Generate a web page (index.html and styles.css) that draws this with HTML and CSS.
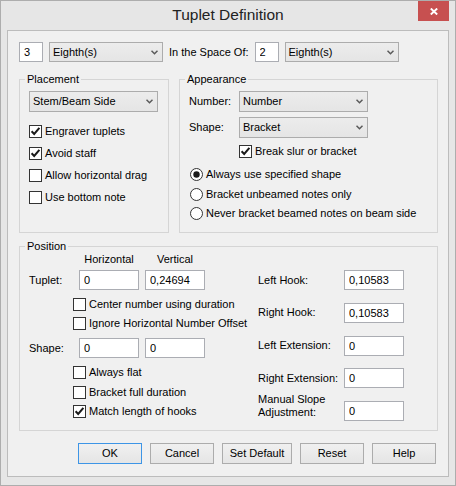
FILE: index.html
```html
<!DOCTYPE html>
<html>
<head>
<meta charset="utf-8">
<title>Tuplet Definition</title>
<link rel="stylesheet" href="styles.css">
</head>
<body>
<div class="window">
  <div class="titlebar">
    <div class="title">Tuplet Definition</div>
    <div class="close"><svg width="8" height="7" viewBox="0 0 8 7"><path d="M0.8 0.5 L7.2 6.5 M7.2 0.5 L0.8 6.5" stroke="#fff" stroke-width="1.9" fill="none"/></svg></div>
  </div>
  <div class="client">
    <div class="top-row">
      <input class="field num" value="3">
      <div class="combo w114"><span>Eighth(s)</span><svg class="chev" width="7" height="5" viewBox="0 0 7 5"><path d="M0.5 0.8 L3.5 3.8 L6.5 0.8" stroke="#5a5a5a" stroke-width="1.5" fill="none"/></svg></div>
      <span class="lbl">In the Space Of:</span>
      <input class="field num" value="2">
      <div class="combo w114"><span>Eighth(s)</span><svg class="chev" width="7" height="5" viewBox="0 0 7 5"><path d="M0.5 0.8 L3.5 3.8 L6.5 0.8" stroke="#5a5a5a" stroke-width="1.5" fill="none"/></svg></div>
    </div>

    <div class="groups">
      <fieldset class="group placement">
        <legend>Placement</legend>
        <div class="group-body">
          <div class="combo w129 tall"><span>Stem/Beam Side</span><svg class="chev" width="7" height="5" viewBox="0 0 7 5"><path d="M0.5 0.8 L3.5 3.8 L6.5 0.8" stroke="#5a5a5a" stroke-width="1.5" fill="none"/></svg></div>
          <div class="checks place-checks">
            <label class="check"><span class="box"><svg width="11" height="11" viewBox="0 0 11 11"><path d="M1.6 5.2 L4.2 8 L9.4 1.8" stroke="#1a1a1a" stroke-width="2" fill="none"/></svg></span>Engraver tuplets</label>
            <label class="check"><span class="box"><svg width="11" height="11" viewBox="0 0 11 11"><path d="M1.6 5.2 L4.2 8 L9.4 1.8" stroke="#1a1a1a" stroke-width="2" fill="none"/></svg></span>Avoid staff</label>
            <label class="check"><span class="box"></span>Allow horizontal drag</label>
            <label class="check"><span class="box"></span>Use bottom note</label>
          </div>
        </div>
      </fieldset>

      <fieldset class="group appearance">
        <legend>Appearance</legend>
        <div class="group-body">
          <div class="form-row">
            <span class="lbl w50">Number:</span>
            <div class="combo w129 tall"><span>Number</span><svg class="chev" width="7" height="5" viewBox="0 0 7 5"><path d="M0.5 0.8 L3.5 3.8 L6.5 0.8" stroke="#5a5a5a" stroke-width="1.5" fill="none"/></svg></div>
          </div>
          <div class="form-row second">
            <span class="lbl w50">Shape:</span>
            <div class="combo w129 tall"><span>Bracket</span><svg class="chev" width="7" height="5" viewBox="0 0 7 5"><path d="M0.5 0.8 L3.5 3.8 L6.5 0.8" stroke="#5a5a5a" stroke-width="1.5" fill="none"/></svg></div>
          </div>
          <label class="check break"><span class="box"><svg width="11" height="11" viewBox="0 0 11 11"><path d="M1.6 5.2 L4.2 8 L9.4 1.8" stroke="#1a1a1a" stroke-width="2" fill="none"/></svg></span>Break slur or bracket</label>
          <div class="radios">
            <label class="radio"><svg class="rdo" width="13" height="13" viewBox="0 0 13 13"><circle cx="6.5" cy="6.5" r="6" fill="#fff" stroke="#333"/><circle cx="6.5" cy="6.5" r="3.2" fill="#1a1a1a"/></svg>Always use specified shape</label>
            <label class="radio"><svg class="rdo" width="13" height="13" viewBox="0 0 13 13"><circle cx="6.5" cy="6.5" r="6" fill="#fff" stroke="#333"/></svg>Bracket unbeamed notes only</label>
            <label class="radio"><svg class="rdo" width="13" height="13" viewBox="0 0 13 13"><circle cx="6.5" cy="6.5" r="6" fill="#fff" stroke="#333"/></svg>Never bracket beamed notes on beam side</label>
          </div>
        </div>
      </fieldset>
    </div>

    <fieldset class="group position">
      <legend>Position</legend>
      <div class="pos-body">
        <div class="pos-left">
          <div class="pos-grid pos-head"><span class="col-h">Horizontal</span><span class="col-v">Vertical</span></div>
          <div class="pos-grid pos-row">
            <span class="lbl">Tuplet:</span>
            <input class="field w60" value="0">
            <input class="field w60" value="0,24694">
          </div>
          <div class="pos-checks first">
            <label class="check"><span class="box"></span>Center number using duration</label>
            <label class="check"><span class="box"></span>Ignore Horizontal Number Offset</label>
          </div>
          <div class="pos-grid pos-row shape-row">
            <span class="lbl">Shape:</span>
            <input class="field w60" value="0">
            <input class="field w60" value="0">
          </div>
          <div class="pos-checks second">
            <label class="check"><span class="box"></span>Always flat</label>
            <label class="check"><span class="box"></span>Bracket full duration</label>
            <label class="check"><span class="box"><svg width="11" height="11" viewBox="0 0 11 11"><path d="M1.6 5.2 L4.2 8 L9.4 1.8" stroke="#1a1a1a" stroke-width="2" fill="none"/></svg></span>Match length of hooks</label>
          </div>
        </div>
        <div class="pos-right">
          <div class="r-row"><span class="lbl w86">Left Hook:</span><input class="field w60" value="0,10583"></div>
          <div class="r-row"><span class="lbl w86">Right Hook:</span><input class="field w60" value="0,10583"></div>
          <div class="r-row"><span class="lbl w86">Left Extension:</span><input class="field w60" value="0"></div>
          <div class="r-row"><span class="lbl w86">Right Extension:</span><input class="field w60" value="0"></div>
          <div class="r-row two"><span class="lbl w86 two-line">Manual Slope<br>Adjustment:</span><input class="field w60" value="0"></div>
        </div>
      </div>
    </fieldset>

    <div class="buttons">
      <button class="btn ok">OK</button>
      <button class="btn">Cancel</button>
      <button class="btn wide">Set Default</button>
      <button class="btn">Reset</button>
      <button class="btn">Help</button>
    </div>
  </div>
</div>
</body>
</html>
```

FILE: styles.css
```css
* {
  box-sizing: border-box;
}

html,
body {
  margin: 0;
  padding: 0;
}

body {
  width: 456px;
  height: 486px;
  font-family: "Liberation Sans", Arial, sans-serif;
  font-size: 11px;
  line-height: 13px;
  color: #000;
  background: #fff;
}

.window {
  width: 456px;
  height: 486px;
  border: 1px solid #adadad;
  background: #e6e6e6;
  display: flex;
  flex-direction: column;
}

/* ---------- title bar ---------- */
.titlebar {
  height: 29px;
  flex: none;
  display: grid;
  grid-template-columns: 1fr auto 1fr;
  align-items: start;
}

.title {
  grid-column: 2;
  font-size: 15.5px;
  line-height: 20px;
  padding-top: 4px;
  color: #222;
  white-space: nowrap;
}

.close {
  grid-column: 3;
  justify-self: end;
  width: 31px;
  height: 20px;
  margin-right: 6px;
  background: #c75050;
  display: flex;
  align-items: center;
  justify-content: center;
}

.close svg {
  display: block;
}

/* ---------- client area ---------- */
.client {
  flex: 1;
  margin: 0 6px 8px;
  border: 1px solid #bcbcbc;
  background: #f0f0f0;
  padding: 11px 10px 0 11px;
  display: flex;
  flex-direction: column;
}

.lbl {
  white-space: nowrap;
}

.w50 { width: 50px; flex: none; }
.w86 { width: 86px; flex: none; }
.w60 { width: 60px; }
.w114 { width: 114px; }
.w129 { width: 129px; }

.field {
  height: 20px;
  margin: 0;
  border: 1px solid #abadb3;
  background: #fff;
  padding: 0 0 0 4px;
  font: inherit;
  line-height: 13px;
  color: #000;
  outline: none;
  flex: none;
}

.num {
  width: 24px;
}

.combo {
  height: 20px;
  flex: none;
  border: 1px solid #acacac;
  background: linear-gradient(#ececec, #e5e5e5);
  display: flex;
  align-items: center;
  justify-content: space-between;
  padding: 0 4px 0 3px;
  white-space: nowrap;
}

.combo.tall {
  height: 21px;
}

.chev {
  display: block;
  flex: none;
}

.top-row {
  display: flex;
  align-items: center;
  gap: 6px;
  height: 20px;
  flex: none;
}

/* ---------- group boxes ---------- */
.groups {
  display: flex;
  gap: 10px;
  margin-top: 10px;
  height: 161px;
  flex: none;
}

fieldset.group {
  margin: 0;
  padding: 0;
  border: 1px solid #d5d5d5;
  min-width: 0;
}

fieldset.group legend {
  padding: 0 2px;
  margin-left: 5px;
  line-height: 14px;
}

fieldset.placement {
  width: 150px;
}

fieldset.appearance {
  width: 259px;
}

.group-body {
  padding: 5px 9px 0;
}

/* checkboxes & radios */
.checks {
  display: flex;
  flex-direction: column;
  gap: 9px;
}

.place-checks {
  margin-top: 13px;
}

.check {
  display: flex;
  align-items: center;
  gap: 3px;
  height: 13px;
  white-space: nowrap;
}

.box {
  width: 13px;
  height: 13px;
  flex: none;
  border: 1px solid #333;
  background: #fff;
  display: flex;
  align-items: center;
  justify-content: center;
}

.box svg {
  display: block;
}

.form-row {
  display: flex;
  align-items: center;
}

.form-row.second {
  margin-top: 5px;
}

.check.break {
  margin-top: 7px;
  margin-left: 50px;
}

.radios {
  margin-top: 10px;
  display: flex;
  flex-direction: column;
  gap: 6.5px;
}

.radio {
  display: flex;
  align-items: center;
  gap: 3px;
  height: 13px;
  margin-left: 1px;
  white-space: nowrap;
}

.rdo {
  display: block;
  flex: none;
}

/* ---------- position ---------- */
fieldset.position {
  margin-top: 6px;
  width: 419px;
  height: 192px;
  flex: none;
}

.pos-body {
  display: flex;
  padding: 0 9px;
}

.pos-left {
  width: 229px;
  flex: none;
  display: flex;
  flex-direction: column;
}

.pos-grid {
  display: grid;
  grid-template-columns: 44px 60px 60px;
  column-gap: 6px;
  align-items: center;
}

.pos-head {
  height: 13px;
}

.col-h {
  grid-column: 2;
  text-align: center;
}

.col-v {
  grid-column: 3;
  text-align: center;
}

.pos-row {
  height: 20px;
  margin-top: 4px;
}

.pos-row.shape-row {
  margin-top: 8px;
}

.pos-checks {
  margin-left: 44px;
  display: flex;
  flex-direction: column;
}

.pos-checks.first {
  margin-top: 8px;
  gap: 6px;
}

.pos-checks.second {
  margin-top: 8px;
  gap: 6.5px;
}

.pos-right {
  flex: 1;
  padding-top: 17px;
  display: flex;
  flex-direction: column;
  gap: 12.75px;
}

.r-row {
  display: flex;
  align-items: center;
  height: 20px;
}

.r-row.two {
  align-items: flex-end;
}

.two-line {
  margin-bottom: 2px;
}

/* ---------- buttons ---------- */
.buttons {
  display: flex;
  justify-content: flex-end;
  gap: 8px;
  margin-top: 12px;
  margin-right: 2px;
  flex: none;
}

.btn {
  width: 64px;
  height: 21px;
  margin: 0;
  padding: 0;
  border: 1px solid #acacac;
  background: linear-gradient(#f0f0f0, #e5e5e5);
  font: inherit;
  color: #000;
  border-radius: 0;
}

.btn.wide {
  width: 70px;
}

.btn.ok {
  border-color: #3d95e6;
}
```
